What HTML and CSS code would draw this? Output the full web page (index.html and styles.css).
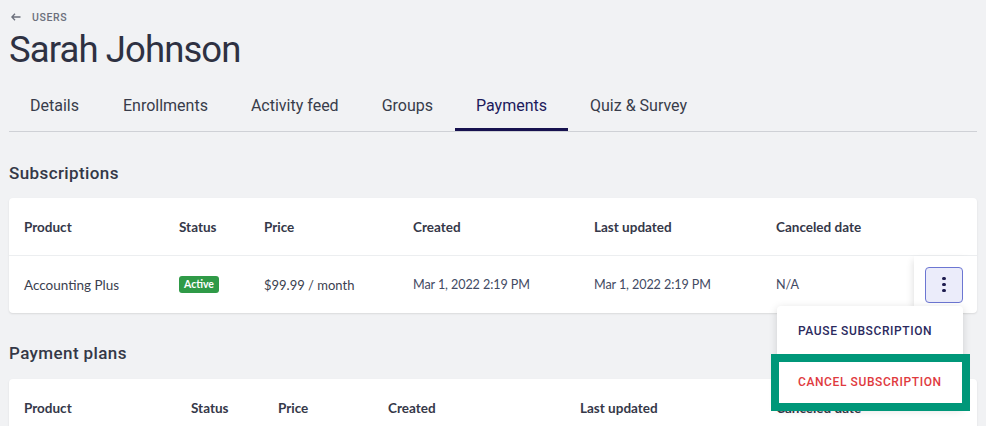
FILE: index.html
```html
<!DOCTYPE html>
<html>
<head>
<meta charset="utf-8">
<link rel="stylesheet" href="styles.css">
</head>
<body>
<div class="page">
  <div class="crumb">
    <svg class="crumb-arrow" width="10" height="8" viewBox="0 0 10 8"><path d="M4 0.8 L0.9 4 L4 7.2 M1 4 H9.5" fill="none" stroke="#6b6f7b" stroke-width="1.3"/></svg>
    <span>USERS</span>
  </div>
  <h1 class="title">Sarah Johnson</h1>
  <div class="tabs">
    <div class="tab">Details</div>
    <div class="tab">Enrollments</div>
    <div class="tab">Activity feed</div>
    <div class="tab">Groups</div>
    <div class="tab active">Payments</div>
    <div class="tab">Quiz &amp; Survey</div>
  </div>

  <h2 class="section-title first">Subscriptions</h2>
  <div class="card subs">
    <div class="row head">
      <div class="cell">Product</div>
      <div class="cell">Status</div>
      <div class="cell">Price</div>
      <div class="cell">Created</div>
      <div class="cell">Last updated</div>
      <div class="cell">Canceled date</div>
      <div class="cell"></div>
    </div>
    <div class="row body">
      <div class="cell">Accounting Plus</div>
      <div class="cell"><span class="badge">Active</span></div>
      <div class="cell price">$99.99 / month</div>
      <div class="cell date">Mar 1, 2022 2:19 PM</div>
      <div class="cell date">Mar 1, 2022 2:19 PM</div>
      <div class="cell date">N/A</div>
      <div class="cell action">
        <button class="kebab"><span></span><span></span><span></span></button>
      </div>
    </div>
    <div class="menu">
      <div class="menu-item pause">PAUSE SUBSCRIPTION</div>
      <div class="menu-item cancel">CANCEL SUBSCRIPTION</div>
      <div class="highlight"></div>
    </div>
  </div>

  <h2 class="section-title second">Payment plans</h2>
  <div class="card plans">
    <div class="row head">
      <div class="cell">Product</div>
      <div class="cell">Status</div>
      <div class="cell">Price</div>
      <div class="cell">Created</div>
      <div class="cell">Last updated</div>
      <div class="cell">Canceled date</div>
    </div>
  </div>
</div>
</body>
</html>
```

FILE: styles.css
```css
html, body {
  margin: 0;
  padding: 0;
  background: #f1f2f4;
}
body {
  font-family: Roboto, "Liberation Sans", sans-serif;
  color: #2f3240;
}
.page {
  padding: 0 9px;
}
.crumb {
  height: 34px;
  display: flex;
  align-items: center;
  gap: 11px;
  padding-left: 2px;
  font-size: 10.5px;
  font-weight: 500;
  letter-spacing: 0.6px;
  color: #6b6f7b;
}
.crumb-arrow {
  display: block;
}
.title {
  margin: -6px 0 0;
  font-size: 36.5px;
  font-weight: 400;
  line-height: 44px;
  color: #2e3142;
  letter-spacing: -0.9px;
}
.tabs {
  margin-top: 10px;
  display: flex;
  border-bottom: 1px solid #cfd1d6;
  height: 49px;
}
.tab {
  padding: 14px 21px 12px;
  line-height: 20px;
  font-size: 16px;
  color: #383c4a;
  border-bottom: 3px solid transparent;
  margin-right: 1px;
}
.tab:nth-child(2) { margin-left: 1px; }
.tab.active {
  color: #1d1a5c;
  border-bottom-color: #17124f;
}
.section-title {
  margin: 0;
  font-size: 17px;
  font-weight: 500;
  letter-spacing: 0.4px;
  line-height: 24px;
  color: #343847;
}
.section-title.first {
  margin-top: 29px;
  margin-bottom: 13px;
}
.section-title.second {
  margin-top: 28px;
  margin-bottom: 14px;
}
.card {
  position: relative;
  background: #fff;
  border-radius: 4px;
  box-shadow: 0 1px 2px rgba(0, 0, 0, 0.1);
  font-family: Lato, "Open Sans", sans-serif;
  font-size: 13.5px;
}
.subs .row {
  display: grid;
  grid-template-columns: 155px 85px 149px 181px 182px 153px 63px;
}
.plans .row {
  display: grid;
  grid-template-columns: 167px 87px 110px 192px 196px 216px;
}
.row.head {
  height: 57px;
  border-bottom: 1px solid #eceef0;
  font-weight: 700;
  color: #353849;
}
.row.body {
  height: 57px;
  color: #3b3f4f;
}
.cell {
  display: flex;
  align-items: center;
  padding-left: 15px;
}
.cell.price {
  font-size: 13px;
}
.cell.date {
  color: #434a63;
  font-size: 12.6px;
  letter-spacing: -0.1px;
}
.badge {
  background: #2f9a47;
  color: #fff;
  font-weight: 700;
  font-size: 10.5px;
  border-radius: 3px;
  padding: 1px 5px 2px;
  line-height: 14px;
}
.cell.action {
  padding-left: 11px;
  box-shadow: -5px 0 7px -4px rgba(0, 0, 0, 0.12);
}
.kebab {
  width: 38px;
  height: 36px;
  background: #ebecfa;
  border: 1px solid #6c76d2;
  border-radius: 4px;
  display: flex;
  flex-direction: column;
  align-items: center;
  justify-content: center;
  gap: 2.5px;
  padding: 0;
}
.kebab span {
  width: 3.5px;
  height: 3.5px;
  border-radius: 50%;
  background: #1d1b4f;
}
.menu {
  position: absolute;
  left: 768px;
  top: 108px;
  width: 186px;
  background: #fff;
  border-radius: 4px;
  box-shadow: 0 2px 8px rgba(0, 0, 0, 0.15);
  z-index: 5;
  font-family: Roboto, "Liberation Sans", sans-serif;
  font-size: 12px;
  font-weight: 500;
  letter-spacing: 0.6px;
}
.menu-item {
  height: 50px;
  display: flex;
  align-items: center;
  padding-left: 21px;
}
.menu-item.pause {
  color: #2b2a5e;
}
.menu-item.cancel {
  height: 52px;
  color: #e03a3e;
}
.highlight {
  position: absolute;
  left: -6px;
  top: 48px;
  width: 199px;
  height: 57px;
  border: 8px solid #009779;
  box-sizing: border-box;
}
.plans {
  height: 60px;
}
```
